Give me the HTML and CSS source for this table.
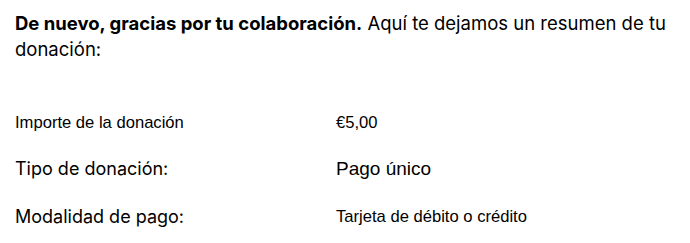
FILE: index.html
```html
<!DOCTYPE html>
<html lang="es">
<head>
<meta charset="utf-8">
<link rel="stylesheet" href="styles.css">
</head>
<body>
<div class="page">
  <p class="intro"><strong>De nuevo, gracias por tu colaboración.</strong> Aquí te dejamos un resumen de tu donación:</p>
  <div class="summary">
    <div class="row">
      <span class="label arial">Importe de la donación</span>
      <span class="value arial">€5,00</span>
    </div>
    <div class="row">
      <span class="label">Tipo de donación:</span>
      <span class="value arial-lg">Pago único</span>
    </div>
    <div class="row row-last">
      <span class="label">Modalidad de pago:</span>
      <span class="value arial">Tarjeta de débito o crédito</span>
    </div>
  </div>
</div>
</body>
</html>
```
FILE: styles.css
```css
html, body {
  margin: 0;
  padding: 0;
  background: #ffffff;
}
body {
  color: #000000;
  font-family: Inter, "Noto Sans", sans-serif;
  font-size: 18px;
}
.page {
  padding: 10px 15px 0 15px;
}
.intro {
  margin: 0;
  font-size: 18.5px;
  line-height: 26px;
  width: 665px;
}
.intro strong {
  font-weight: 700;
}
.summary {
  margin-top: 49px;
  display: flex;
  flex-direction: column;
  gap: 22px;
}
.row {
  display: grid;
  grid-template-columns: 321px 1fr;
  align-items: center;
  line-height: 24px;
}
.row-last {
  margin-top: 2px;
}
.arial {
  font-family: "Liberation Sans", Arial, sans-serif;
  font-size: 16.6px;
}
.arial-lg {
  font-family: "Liberation Sans", Arial, sans-serif;
  font-size: 19px;
}
```
